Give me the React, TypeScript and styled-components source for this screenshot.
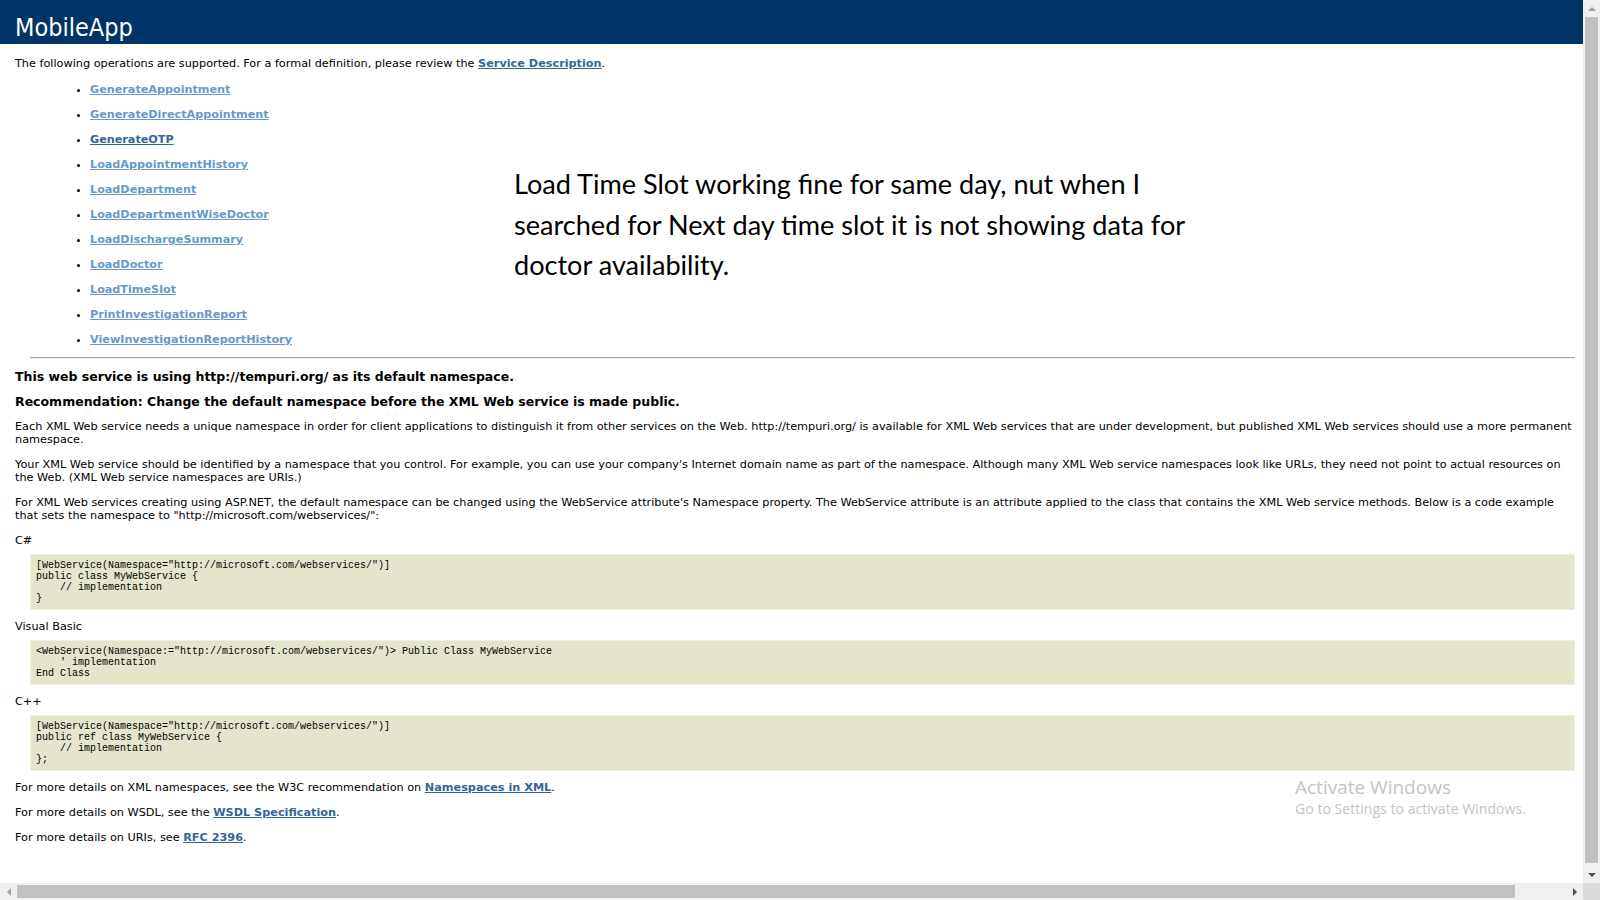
import React from "react";
import styled, { createGlobalStyle } from "styled-components";

const BODY_FONT = `"DejaVu Sans", Verdana, sans-serif`;
const HEAD_FONT = `"DejaVu Sans Condensed", "Liberation Sans", sans-serif`;
const NOTE_FONT = `Lato, "Open Sans", sans-serif`;
const MONO_FONT = `"Liberation Mono", "Courier New", monospace`;

const Global = createGlobalStyle`
  html, body { margin: 0; padding: 0; overflow: hidden; background: #ffffff; }
  #root { width: 1600px; height: 900px; }
`;

const Frame = styled.div`
  position: relative;
  width: 1600px;
  height: 900px;
  display: grid;
  grid-template-columns: 1583px 17px;
  grid-template-rows: 883px 17px;
  background: #ffffff;
`;

const Viewport = styled.div`
  overflow: hidden;
  padding-right: 8px;
  box-sizing: border-box;
  color: #000000;
`;

const Content = styled.div`
  margin-left: 30px;
  font-family: ${BODY_FONT};
  font-size: 11.26px;
  line-height: 13px;
`;

const Heading = styled.h1`
  margin: 0 0 0 -30px;
  padding: 12px 0 1px 15px;
  width: 105%;
  background: #003366;
  color: #ffffff;
  font-family: ${HEAD_FONT};
  font-size: 25px;
  font-weight: normal;
  line-height: 31px;
`;

const Intro = styled.p`
  margin: 13px 0 0 -15px;
  line-height: 14px;
`;

const OpsRow = styled.div`
  display: grid;
  grid-template-columns: 484px 1fr;
  margin-top: 11px;
`;

const OpList = styled.ul`
  margin: 0 0 0 20px;
  padding-left: 40px;
  list-style: disc;
`;

const OpItem = styled.li`
  font-size: 11.2px;
  line-height: 15px;
  & + & { margin-top: 10px; }
`;

const Link = styled.a<{ $visited?: boolean }>`
  color: ${(p) => (p.$visited ? "#6699cc" : "#336699")};
  font-weight: bold;
  text-decoration: underline;
  cursor: pointer;
`;

const Note = styled.p`
  margin: 82px 0 0 0;
  font-family: ${NOTE_FONT};
  font-size: 27.1px;
  line-height: 40.5px;
  color: #000000;
`;

const Rule = styled.hr`
  margin: 10px 0 0 0;
  height: 0;
  border: 0;
  border-top: 1px solid #a0a0a0;
  border-bottom: 1px solid #eeeeee;
`;

const Notice = styled.h3`
  margin: 10px 0 10px -15px;
  font-size: 12.5px;
  line-height: 15px;
  font-weight: bold;
  & + p { margin-top: 11px; }
`;

const Para = styled.p`
  margin: 0 0 12px -15px;
  line-height: 13px;
`;

const Code = styled.pre`
  margin: -5px 0 10px 0;
  padding: 5px;
  background: #e5e5cc;
  border: 1px solid #f0f0e0;
  font-family: ${MONO_FONT};
  font-size: 10px;
  line-height: 11px;
  color: #000000;
`;

const FooterPara = styled(Para)`
  & + & { margin-top: 0; }
`;

/* scrollbars */
const VScroll = styled.div`
  display: flex;
  flex-direction: column;
  background: #f0f0f0;
`;

const HScroll = styled.div`
  display: flex;
  background: #f0f0f0;
`;

const ArrowBox = styled.div`
  flex: 0 0 17px;
  width: 17px;
  height: 17px;
  display: flex;
  align-items: center;
  justify-content: center;
`;

const VThumb = styled.div`
  flex: 1;
  margin: 0 2px 3px 2px;
  background: #c1c1c1;
`;

const HThumb = styled.div`
  flex: 0 0 1498px;
  margin: 2px 0;
  background: #c1c1c1;
`;

const HTrackRest = styled.div`
  flex: 1;
`;

const Corner = styled.div`
  background: #dcdcdc;
`;

const Watermark = styled.div`
  position: absolute;
  left: 1295px;
  top: 775px;
  font-family: "Open Sans", "Noto Sans", sans-serif;
  color: #c4c4c4;
  pointer-events: none;
`;

const WmTitle = styled.div`
  font-size: 19px;
  line-height: 24px;
`;

const WmSub = styled.div`
  font-size: 14.1px;
  line-height: 20px;
`;

type Dir = "up" | "down" | "left" | "right";

const Arrow: React.FC<{ dir: Dir; dim?: boolean }> = ({ dir, dim }) => {
  const pts: Record<Dir, string> = {
    up: "4,7 8,3 12,7",
    down: "4,3 8,7 12,3",
    left: "7,4 3,8 7,12",
    right: "3,4 7,8 3,12",
  };
  const vertical = dir === "up" || dir === "down";
  return (
    <ArrowBox>
      <svg width={vertical ? 16 : 10} height={vertical ? 10 : 16} viewBox={vertical ? "0 0 16 10" : "0 0 10 16"}>
        <polygon points={pts[dir]} fill={dim ? "#a3a3a3" : "#505050"} />
      </svg>
    </ArrowBox>
  );
};

const operations: { name: string; visited: boolean }[] = [
  { name: "GenerateAppointment", visited: true },
  { name: "GenerateDirectAppointment", visited: true },
  { name: "GenerateOTP", visited: false },
  { name: "LoadAppointmentHistory", visited: true },
  { name: "LoadDepartment", visited: true },
  { name: "LoadDepartmentWiseDoctor", visited: true },
  { name: "LoadDischargeSummary", visited: true },
  { name: "LoadDoctor", visited: true },
  { name: "LoadTimeSlot", visited: true },
  { name: "PrintInvestigationReport", visited: true },
  { name: "ViewInvestigationReportHistory", visited: true },
];

const csCode = `[WebService(Namespace="http://microsoft.com/webservices/")]
public class MyWebService {
    // implementation
}`;

const vbCode = `<WebService(Namespace:="http://microsoft.com/webservices/")> Public Class MyWebService
    ' implementation
End Class`;

const cppCode = `[WebService(Namespace="http://microsoft.com/webservices/")]
public ref class MyWebService {
    // implementation
};`;

export default function App() {
  return (
    <>
      <Global />
      <Frame>
        <Viewport>
          <Content>
            <Heading>MobileApp</Heading>
            <Intro>
              The following operations are supported. For a formal definition, please review the{" "}
              <Link>Service Description</Link>.
            </Intro>
            <OpsRow>
              <OpList>
                {operations.map((op) => (
                  <OpItem key={op.name}>
                    <Link $visited={op.visited}>{op.name}</Link>
                  </OpItem>
                ))}
              </OpList>
              <Note>
                Load Time Slot working fine for same day, nut when I<br />
                searched for Next day time slot it is not showing data for<br />
                doctor availability.
              </Note>
            </OpsRow>
            <Rule />
            <Notice>This web service is using http://tempuri.org/ as its default namespace.</Notice>
            <Notice>Recommendation: Change the default namespace before the XML Web service is made public.</Notice>
            <Para>
              Each XML Web service needs a unique namespace in order for client applications to distinguish it from
              other services on the Web. http://tempuri.org/ is available for XML Web services that are under
              development, but published XML Web services should use a more permanent namespace.
            </Para>
            <Para>
              Your XML Web service should be identified by a namespace that you control. For example, you can use your
              company's Internet domain name as part of the namespace. Although many XML Web service namespaces look
              like URLs, they need not point to actual resources on the Web. (XML Web service namespaces are URIs.)
            </Para>
            <Para>
              For XML Web services creating using ASP.NET, the default namespace can be changed using the WebService
              attribute's Namespace property. The WebService attribute is an attribute applied to the class that
              contains the XML Web service methods. Below is a code example that sets the namespace to
              "http://microsoft.com/webservices/":
            </Para>
            <Para>C#</Para>
            <Code>{csCode}</Code>
            <Para>Visual Basic</Para>
            <Code>{vbCode}</Code>
            <Para>C++</Para>
            <Code>{cppCode}</Code>
            <FooterPara>
              For more details on XML namespaces, see the W3C recommendation on <Link>Namespaces in XML</Link>.
            </FooterPara>
            <FooterPara>
              For more details on WSDL, see the <Link>WSDL Specification</Link>.
            </FooterPara>
            <FooterPara>
              For more details on URIs, see <Link>RFC 2396</Link>.
            </FooterPara>
          </Content>
        </Viewport>
        <VScroll>
          <Arrow dir="up" dim />
          <VThumb />
          <Arrow dir="down" />
        </VScroll>
        <HScroll>
          <Arrow dir="left" dim />
          <HThumb />
          <HTrackRest />
          <Arrow dir="right" />
        </HScroll>
        <Corner />
        <Watermark>
          <WmTitle>Activate Windows</WmTitle>
          <WmSub>Go to Settings to activate Windows.</WmSub>
        </Watermark>
      </Frame>
    </>
  );
}
